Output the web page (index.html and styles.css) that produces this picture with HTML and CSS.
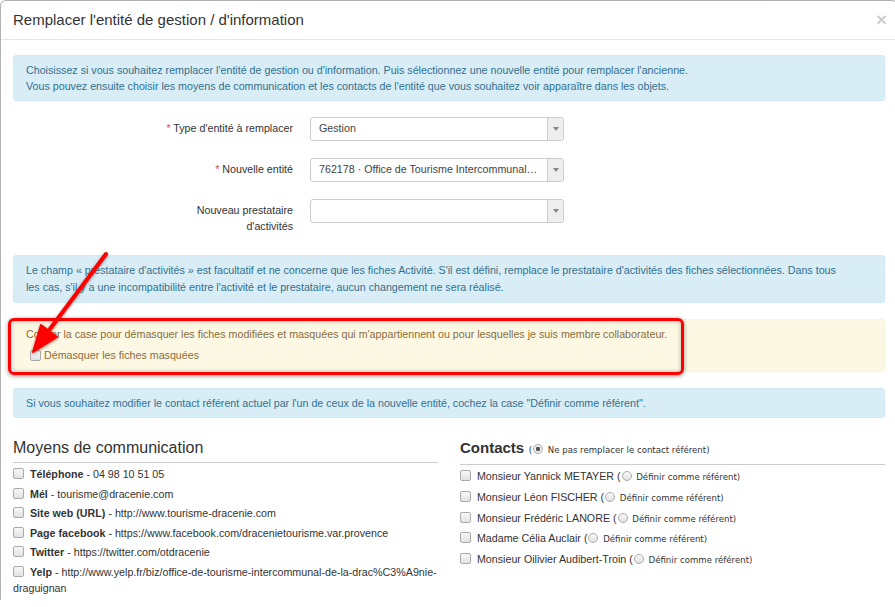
FILE: index.html
```html
<!DOCTYPE html>
<html lang="fr">
<head>
    <meta charset="UTF-8">
    <meta name="viewport" content="width=device-width, initial-scale=1.0">
    <title>Remplacer l'entité de gestion / d'information</title>
    <link rel="stylesheet" href="styles.css">
</head>
<body>
    <div class="modal">
        <div class="modal-header">
            <h4 class="modal-title">Remplacer l'entité de gestion / d'information</h4>
            <span class="close">&times;</span>
        </div>
        <div class="modal-body">
            <div class="alert alert-info">
                Choisissez si vous souhaitez remplacer l'entité de gestion ou d'information. Puis sélectionnez une nouvelle entité pour remplacer l'ancienne.<br>
                Vous pouvez ensuite choisir les moyens de communication et les contacts de l'entité que vous souhaitez voir apparaître dans les objets.
            </div>

            <div class="form">
                <div class="form-row">
                    <label class="form-label"><span class="required">*</span> Type d'entité à remplacer</label>
                    <div class="select">
                        <span class="select-value">Gestion</span>
                        <span class="select-arrow"></span>
                    </div>
                </div>
                <div class="form-row">
                    <label class="form-label"><span class="required">*</span> Nouvelle entité</label>
                    <div class="select">
                        <span class="select-value">762178 · Office de Tourisme Intercommunal de la Dracénie</span>
                        <span class="select-arrow"></span>
                    </div>
                </div>
                <div class="form-row">
                    <label class="form-label">Nouveau prestataire d'activités</label>
                    <div class="select">
                        <span class="select-value"></span>
                        <span class="select-arrow"></span>
                    </div>
                </div>
            </div>

            <div class="alert alert-info alert-wide">
                Le champ « prestataire d'activités » est facultatif et ne concerne que les fiches Activité. S'il est défini, remplace le prestataire d'activités des fiches sélectionnées. Dans tous les cas, s'il y a une incompatibilité entre l'activité et le prestataire, aucun changement ne sera réalisé.
            </div>

            <div class="alert alert-warning">
                Cocher la case pour démasquer les fiches modifiées et masquées qui m'appartiennent ou pour lesquelles je suis membre collaborateur.
                <label class="check-row"><input type="checkbox"> Démasquer les fiches masquées</label>
                <div class="highlight"></div>
            </div>

            <div class="alert alert-info">
                Si vous souhaitez modifier le contact référent actuel par l'un de ceux de la nouvelle entité, cochez la case "Définir comme référent".
            </div>

            <div class="columns">
                <div class="col">
                    <h3 class="col-title">Moyens de communication</h3>
                    <ul class="item-list">
                        <li><input type="checkbox"> <b>Téléphone</b> - 04 98 10 51 05</li>
                        <li><input type="checkbox"> <b>Mél</b> - tourisme@dracenie.com</li>
                        <li><input type="checkbox"> <b>Site web (URL)</b> - http://www.tourisme-dracenie.com</li>
                        <li><input type="checkbox"> <b>Page facebook</b> - https://www.facebook.com/dracenietourisme.var.provence</li>
                        <li><input type="checkbox"> <b>Twitter</b> - https://twitter.com/otdracenie</li>
                        <li><input type="checkbox"> <b>Yelp</b> - <span class="nowrap">http://www.yelp.fr/biz/office-de-tourisme-intercommunal-de-la-drac%C3%A9nie-</span>draguignan</li>
                    </ul>
                </div>
                <div class="col">
                    <h3 class="col-title"><b>Contacts</b> <span class="small">(<input type="radio" name="referent" checked> Ne pas remplacer le contact référent)</span></h3>
                    <ul class="item-list contacts">
                        <li><input type="checkbox"> Monsieur Yannick METAYER (<span class="small"><input type="radio" name="referent"> Définir comme référent)</span></li>
                        <li><input type="checkbox"> Monsieur Léon FISCHER (<span class="small"><input type="radio" name="referent"> Définir comme référent)</span></li>
                        <li><input type="checkbox"> Monsieur Frédéric LANORE (<span class="small"><input type="radio" name="referent"> Définir comme référent)</span></li>
                        <li><input type="checkbox"> Madame Célia Auclair (<span class="small"><input type="radio" name="referent"> Définir comme référent)</span></li>
                        <li><input type="checkbox"> Monsieur Oilivier Audibert-Troin (<span class="small"><input type="radio" name="referent"> Définir comme référent)</span></li>
                    </ul>
                </div>
            </div>
        </div>
    </div>

    <!-- red annotation arrow pointing at the checkbox -->
    <svg class="arrow" width="895" height="607" viewBox="0 0 895 607">
        <defs>
            <filter id="arrow-shadow" x="-20%" y="-20%" width="140%" height="140%">
                <feDropShadow dx="0" dy="1" stdDeviation="1.5" flood-color="#000" flood-opacity="0.45"/>
            </filter>
        </defs>
        <g filter="url(#arrow-shadow)" fill="#f00" stroke="#f00">
            <line x1="106" y1="254" x2="47" y2="333" stroke-width="4" stroke-linecap="round"/>
            <polygon points="33,352 41,325 57,337" stroke-width="2" stroke-linejoin="round"/>
        </g>
    </svg>
</body>
</html>
```

FILE: styles.css
```css
body {
    font-family: "Liberation Sans", Arial, sans-serif;
    font-size: 10.7px;
    line-height: 16px;
    color: #333;
    margin: 0;
    background: #fff;
    overflow: hidden;
}

.modal {
    width: 898px;
    box-sizing: border-box;
    border: 1px solid rgba(0, 0, 0, 0.3);
    border-bottom: none;
    border-radius: 6px 6px 0 0;
    background: #fff;
}

.modal-header {
    display: flex;
    justify-content: space-between;
    align-items: center;
    padding: 10px 10px 11px 12px;
    border-bottom: 1px solid #e5e5e5;
}

.modal-title {
    margin: 0;
    font-size: 15px;
    line-height: 17px;
    font-weight: normal;
    color: #333;
}

.close {
    font-size: 19px;
    font-weight: bold;
    line-height: 17px;
    color: #000;
    opacity: 0.2;
}

.modal-body {
    padding: 15px 12px 0 12px;
}

/* alerts */
.alert {
    position: relative;
    padding: 6px 12px;
    margin-bottom: 16px;
    border: 1px solid transparent;
    border-radius: 3px;
}

.alert-info {
    color: #31708f;
    background: #d9edf7;
    border-color: #d0e9f4;
}

.alert-wide {
    padding-right: 40px;
    line-height: 17px;
}

.alert-warning {
    color: #8a6d3b;
    background: #fcf8e3;
    border-color: #faf3dc;
    padding: 6px 12px 8px;
}

.check-row {
    display: flex;
    align-items: center;
    margin-top: 5px;
    margin-left: 4px;
}

.highlight {
    position: absolute;
    left: -6px;
    top: -2px;
    width: 676px;
    height: 57px;
    box-sizing: border-box;
    border: 3px solid #f00;
    border-radius: 6px;
    box-shadow: 0 1px 4px rgba(0, 0, 0, 0.45), inset 0 0 4px rgba(0, 0, 0, 0.3);
}

/* form */
.form {
    display: flex;
    flex-direction: column;
    gap: 17px;
    margin: 16px 0 21px;
}

.form-row {
    display: flex;
    align-items: flex-start;
}

.form-label {
    width: 157px;
    margin-left: 140px;
    padding: 3px 17px 0 0;
    box-sizing: border-box;
    text-align: right;
    color: #333;
}

.required {
    color: #d9534f;
}

.select {
    display: flex;
    width: 254px;
    height: 24px;
    box-sizing: border-box;
    border: 1px solid #ccc;
    border-radius: 3px;
    background: #fff;
}

.select-value {
    flex: 1;
    padding: 2px 8px 0;
    color: #444;
    white-space: nowrap;
    overflow: hidden;
    text-overflow: ellipsis;
}

.select-arrow {
    position: relative;
    width: 15px;
    border-left: 1px solid #ccc;
    background: #eee;
    border-radius: 0 3px 3px 0;
}

.select-arrow::after {
    content: "";
    position: absolute;
    left: 5px;
    top: 9px;
    border-left: 3px solid transparent;
    border-right: 3px solid transparent;
    border-top: 4px solid #888;
}

/* checkbox and radio */
input[type="checkbox"],
input[type="radio"] {
    appearance: none;
    -webkit-appearance: none;
    margin: 0 3px 0 0;
    width: 11px;
    height: 11px;
    border: 1px solid #aaa;
    background: linear-gradient(#f7f7f7, #e2e2e2);
    vertical-align: -1px;
    box-sizing: border-box;
}

input[type="checkbox"] {
    border-radius: 2px;
}

input[type="radio"] {
    border-radius: 50%;
    width: 10px;
    height: 10px;
    margin: 0 2px 0 1px;
}

input[type="radio"]:checked {
    background: radial-gradient(circle, #555 0 2px, #eee 2.5px);
}

/* lower two columns */
.columns {
    display: grid;
    grid-template-columns: 1fr 1fr;
    gap: 22px;
}

.col-title {
    margin: 5px 0 0;
    padding-bottom: 5px;
    font-size: 16px;
    line-height: 18px;
    font-weight: normal;
    color: #333;
    border-bottom: 1px solid #ccc;
}

.col-title b {
    font-size: 15px;
}

.small {
    font-family: "DejaVu Sans", Verdana, sans-serif;
    font-size: 8.6px;
    font-weight: normal;
}

.nowrap {
    white-space: nowrap;
}

.item-list {
    list-style: none;
    margin: 3px 0 0;
    padding: 0;
}

.item-list li {
    margin-bottom: 3.6px;
}

.contacts {
    margin-top: 3px;
}

.contacts li {
    margin-bottom: 3.8px;
}

.arrow {
    position: absolute;
    left: 0;
    top: 0;
    pointer-events: none;
}
```
